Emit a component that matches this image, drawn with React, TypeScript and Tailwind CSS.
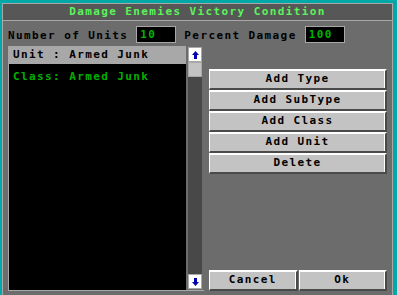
import React from 'react'

const FONT = { fontFamily: '"DejaVu Sans Mono", "Liberation Mono", monospace' }

function Btn({ label, className = '' }: { label: string; className?: string }) {
  return (
    <div
      className={
        'flex h-[21px] items-center justify-center border-t-2 border-l border-r-2 border-b-2 border-t-white border-l-white border-r-[#4a4a4a] border-b-[#4a4a4a] bg-[#c3c3c3] text-[11px] font-bold tracking-[1.4px] text-black shadow-[inset_-1px_0_0_#ffffff] ' +
        className
      }
    >
      {label}
    </div>
  )
}

function Arrow({ up }: { up?: boolean }) {
  return (
    <div className="flex h-[15px] w-[14px] items-center justify-center border border-[#a8a8a8] bg-white">
      <svg width="7" height="8" viewBox="0 0 7 8" className={up ? '' : 'rotate-180'}>
        <path d="M3.5 0 L7 4 L5 4 L5 8 L2 8 L2 4 L0 4 Z" fill="#0000b0" />
      </svg>
    </div>
  )
}

export default function App() {
  return (
    <div className="h-[295px] w-[397px] bg-[#00a8a8] pt-[3px] pl-[2px] pr-[4px]" style={FONT}>
      <div className="flex h-full flex-col border border-b-0 border-[#a8a8a8] bg-[#6c6c6c]">
        <div className="flex h-[17px] items-center justify-center border-b border-[#a8a8a8] bg-[#575757] text-[11px] font-bold tracking-[1.4px] text-[#5cf25c]">
          Damage Enemies Victory Condition
        </div>

        <div className="flex flex-1 flex-col px-[5px] pt-[5px]">
          <div className="flex h-[17px] items-center text-[11px] font-bold tracking-[1.4px] text-black">
            <span className="pt-[3px]">Number of Units</span>
            <div className="ml-[8px] flex h-[17px] w-[40px] items-center border border-[#a8a8a8] bg-black pl-[3px] pt-[2px] text-[#00b000]">10</div>
            <span className="ml-[8px] pt-[3px]">Percent Damage</span>
            <div className="ml-[8px] flex h-[17px] w-[40px] items-center border border-[#a8a8a8] bg-black pl-[3px] pt-[2px] text-[#00b000]">100</div>
          </div>

          <div className="mt-[3px] flex h-[245px] items-start gap-[5px]">
            <div className="flex h-full w-[196px] border-b border-l border-[#a8a8a8] bg-[#6c6c6c]">
              <div className="flex w-[178px] flex-col bg-black text-[11px] font-bold tracking-[1.4px]">
                <div className="flex h-[18px] items-end bg-[#a8a8a8] pb-[1px] pl-[4px] text-black">Unit : Armed Junk</div>
                <div className="mt-[5px] pl-[4px] text-[#00b000]">Class: Armed Junk</div>
              </div>
              <div className="flex flex-1 flex-col px-[2px] pt-[1px] pb-[1px]">
                <Arrow up />
                <div className="h-[15px] w-[14px] border border-[#a8a8a8] bg-[#c3c3c3]" />
                <div className="w-[14px] flex-1 bg-[#484848]" />
                <Arrow />
              </div>
            </div>

            <div className="flex h-full w-[178px] flex-col pt-[23px]">
              <Btn label="Add Type" />
              <Btn label="Add SubType" />
              <Btn label="Add Class" />
              <Btn label="Add Unit" />
              <Btn label="Delete" />
              <div className="flex-1" />
              <div className="flex gap-[1px]">
                <Btn label="Cancel" className="flex-1" />
                <Btn label="Ok" className="flex-1" />
              </div>
            </div>
          </div>
        </div>
      </div>
    </div>
  )
}
